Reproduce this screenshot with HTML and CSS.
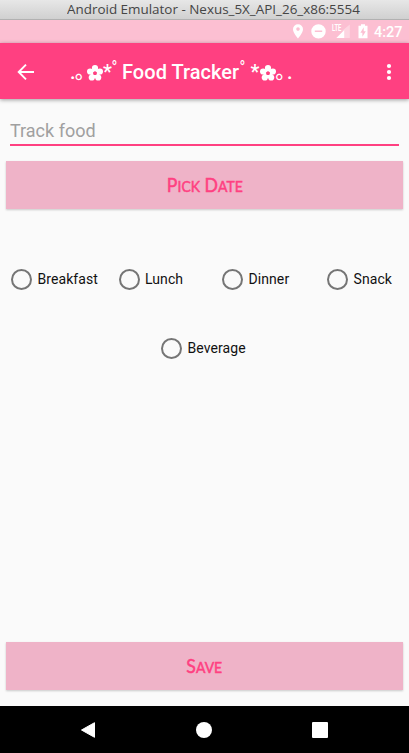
FILE: index.html
```html
<!DOCTYPE html>
<html lang="en">
<head>
<meta charset="utf-8">
<title>Food Tracker</title>
<link rel="stylesheet" href="styles.css">
</head>
<body>
<svg class="defs" width="0" height="0">
  <symbol id="flower" viewBox="0 0 16 16">
    <path fill="none" stroke="currentColor" stroke-width="2.8" d="M8 4.2 11.8 7 10.4 11.5H5.6L4.2 7Z"/>
    <g fill="currentColor"><circle cx="8" cy="3.1" r="3.1"/><circle cx="12.9" cy="6.5" r="3.1"/><circle cx="11.2" cy="12.5" r="3.1"/><circle cx="4.8" cy="12.5" r="3.1"/><circle cx="3.1" cy="6.5" r="3.1"/></g>
  </symbol>
</svg>
<div class="screen">
  <div class="window-title"><span>Android Emulator - Nexus_5X_API_26_x86:5554</span></div>
  <div class="status">
    <svg width="84" height="23" viewBox="0 0 84 23" fill="#fff">
      <path fill-rule="evenodd" d="M8 4.2A5 5 0 0 0 3 9.2C3 13 8 18.4 8 18.4S13 13 13 9.2A5 5 0 0 0 8 4.2ZM8 7.3A1.8 1.8 0 1 1 8 10.9 1.8 1.8 0 0 1 8 7.3Z"/>
      <path fill-rule="evenodd" d="M28.5 4.2A7.2 7.2 0 1 0 28.5 18.6 7.2 7.2 0 0 0 28.5 4.2ZM24.8 10.5H32.2V12.1H24.8Z"/>
      <path opacity=".35" d="M59.8 4.5V18H54.3V10L52.5 11.5V10.5Z"/>
      <path d="M54.3 10V18H46.3Z"/>
      <text x="42" y="10.6" class="lte" textLength="9.4" lengthAdjust="spacingAndGlyphs">LTE</text>
      <path fill-rule="evenodd" d="M71 4.3H75V5.8H77.5V18.3H68.5V5.8H71ZM73.7 7.3 70.4 12.7H72.4V16.8L75.8 11.3H73.7Z"/>
    </svg>
    <span class="clock">4:27</span>
  </div>
  <header class="appbar">
    <svg class="back" width="18" height="18" viewBox="0 0 18 18"><path d="M17 9H2M9 1.7 1.7 9 9 16.3" fill="none" stroke="#fff" stroke-width="1.9"/></svg>
    <h1><span class="dot">.</span><span class="maru">｡</span><svg class="flower"><use href="#flower"/></svg><span class="star">*</span><span class="high">ﾟ</span><span class="name">Food Tracker</span><span class="high">ﾟ</span><span class="star">*</span><svg class="flower"><use href="#flower"/></svg><span class="maru">｡</span><span class="dot">.</span></h1>
    <svg class="more" width="6" height="18" viewBox="0 0 6 18" fill="#fff"><circle cx="3" cy="3" r="2.1"/><circle cx="3" cy="9" r="2.1"/><circle cx="3" cy="15" r="2.1"/></svg>
  </header>
  <main>
    <div class="field">Track food</div>
    <div class="button"><span>P<small>ick</small> D<small>ate</small></span></div>
    <div class="meals">
      <div class="radio"><i></i><span>Breakfast</span></div>
      <div class="radio"><i></i><span>Lunch</span></div>
      <div class="radio"><i></i><span>Dinner</span></div>
      <div class="radio"><i></i><span>Snack</span></div>
    </div>
    <div class="radio beverage"><i></i><span>Beverage</span></div>
    <div class="button save-button"><span>S<small>ave</small></span></div>
  </main>
  <nav>
    <svg width="16" height="18" viewBox="0 0 16 18"><path d="M14.5 1.7V16.3L1.5 9Z" fill="#fff" stroke="#fff" stroke-linejoin="round"/></svg>
    <svg width="16" height="18" viewBox="0 0 16 18"><circle cx="8" cy="9" r="8" fill="#fff"/></svg>
    <svg width="16" height="18" viewBox="0 0 16 18"><rect y="1" width="16" height="16" rx="1" fill="#fff"/></svg>
  </nav>
</div>
</body>
</html>
```
FILE: styles.css
```css
* { box-sizing: border-box; }
body { margin: 0; font-family: Roboto, sans-serif; background: #fafafa; }
svg { display: block; flex: none; }
.defs { position: absolute; }
.screen { width: 409px; height: 753px; display: flex; flex-direction: column; overflow: hidden; }
.window-title {
  height: 20px; flex: none; padding-left: 67px; white-space: nowrap;
  background: linear-gradient(#e7e7e7, #d0d0d0); border-bottom: 1px solid #b1b1b1;
  font: 13px/19px "Open Sans", sans-serif; color: #454545;
}
.window-title span { display: inline-block; transform-origin: 0 50%; transform: scaleX(1.033); }
.status { height: 23px; flex: none; background: #fcbfd2; display: flex; padding-left: 290px; color: #fff; }
.lte { font: 700 8.5px Roboto, sans-serif; }
.clock { font: 500 14.5px/25px Roboto, sans-serif; }
.appbar {
  height: 56px; flex: none; background: #ff4081; color: #fff; display: flex; align-items: center;
  padding: 1px 0 0 17px; box-shadow: 0 1px 4px rgba(0,0,0,.38); z-index: 1;
}
h1 { margin: 0 0 0 35px; width: 316px; display: flex; font: 500 20px/28px Roboto, sans-serif; white-space: nowrap; }
h1 span { flex: none; }
.dot { width: 5px; }
.maru, .high { font-family: "Noto Sans CJK JP", sans-serif; }
.maru { width: 11.5px; margin-top: -1px; }
.flower { width: 16px; height: 16px; margin-top: 7px; }
.star { width: 9px; margin-left: .5px; }
.high { width: 10px; margin-top: -2px; }
.name { width: 118px; letter-spacing: .04px; }
main { flex: 1; display: flex; flex-direction: column; padding: 0 6px; }
.field {
  margin: 14px 4px 15px; height: 33px; width: 389px; border-bottom: 2px solid #ff4081;
  font-size: 18px; line-height: 35px; color: #a0a0a0;
}
.button {
  height: 48px; flex: none; background: #efb3c8; box-shadow: 0 1px 2px rgba(0,0,0,.2);
  display: flex; align-items: center; justify-content: center;
  font: 400 19px/48px Lato, sans-serif; color: #ff4081;
}
.button span { display: block; white-space: nowrap; -webkit-text-stroke: .5px #ff4081; transform: scaleX(.93); }
.button small { font-size: 15px; text-transform: uppercase; }
.meals { display: grid; grid-template-columns: 107.5px 103.5px 105px 1fr; margin-top: 59px; padding-left: 5px; }
.radio { display: flex; align-items: center; height: 22px; font-size: 14px; color: #111; white-space: nowrap; }
.radio i { width: 21px; height: 21px; border: 2px solid #757575; border-radius: 50%; margin-right: 5.5px; flex: none; }
.radio span { letter-spacing: .08px; }
.beverage { margin: 47px 0 0 155px; }
.save-button { margin-top: auto; margin-bottom: 16px; }
nav { height: 47px; flex: none; background: #000; display: flex; justify-content: center; align-items: center; gap: 100px; padding-right: 1px; }
```
